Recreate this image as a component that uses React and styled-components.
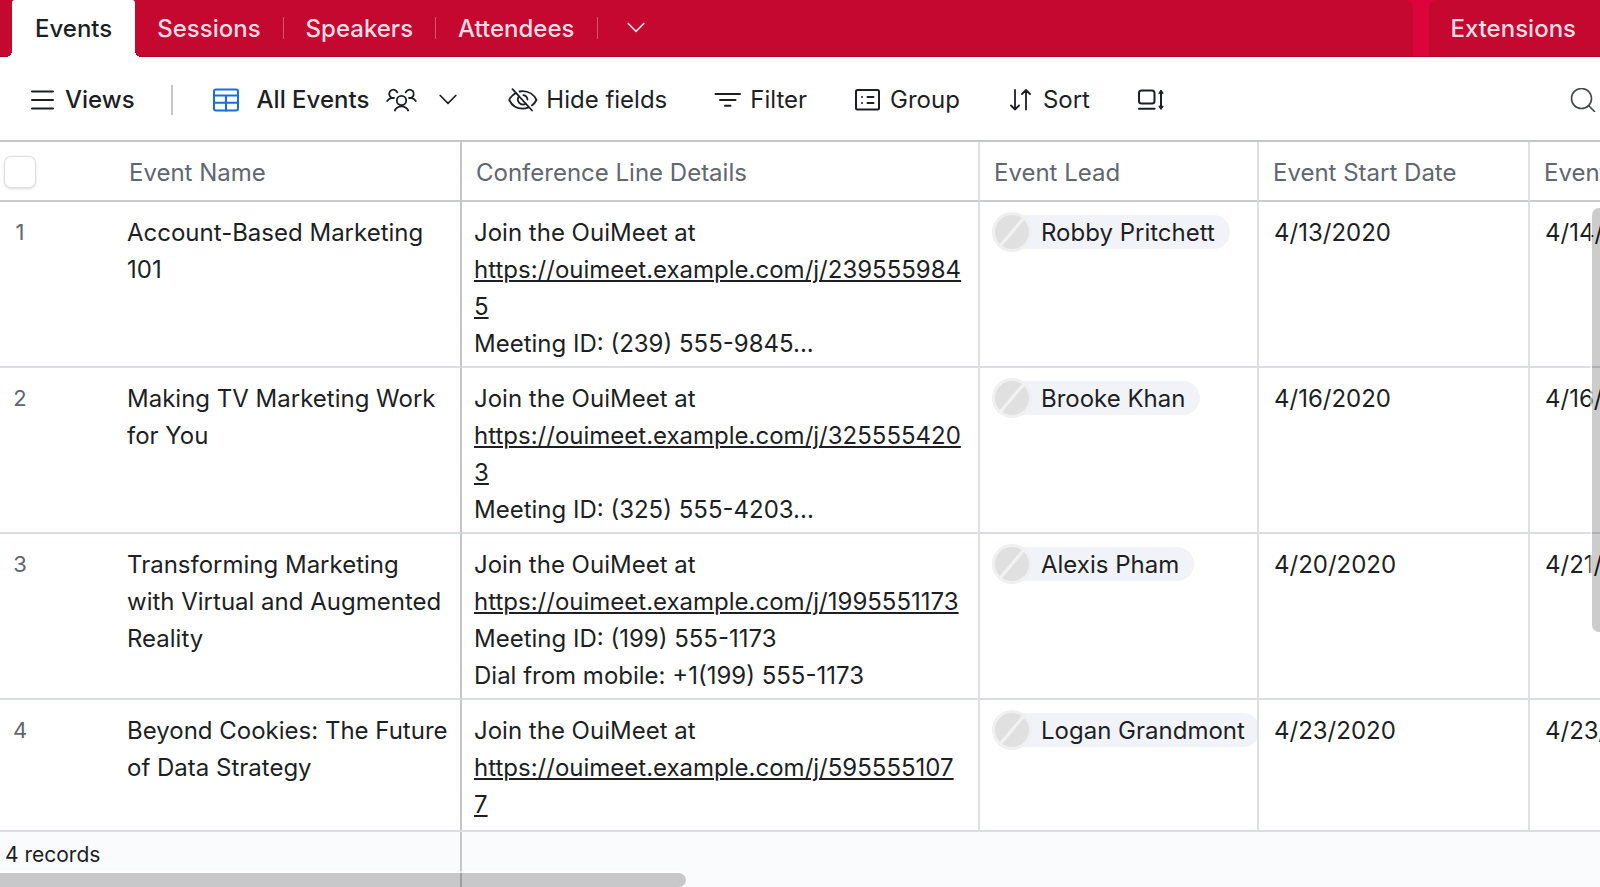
import React from "react";
import styled, { createGlobalStyle, css } from "styled-components";

const Global = createGlobalStyle`
  * { box-sizing: border-box; }
  body { margin: 0; background: #fff; }
  button { border: 0; padding: 0; margin: 0; background: none; font: inherit; color: inherit; cursor: pointer; }
`;

const Page = styled.div`
  display: flex;
  flex-direction: column;
  height: 100vh;
  overflow: hidden;
  color: #1d1f25;
  font: 400 24px/37px Inter, "Liberation Sans", sans-serif;
`;

const TopBar = styled.header`
  flex: none;
  display: flex;
  gap: 16px;
  height: 57px;
  background: #dc043b;
  border-bottom: 1px solid #ab0229;
`;

const TabStrip = styled.nav`
  flex: 1;
  display: flex;
  align-items: center;
  background: #c40830;
  border-radius: 0 8px 0 0;
  color: #fcdde3;
  font-weight: 500;
`;

const Tab = styled.button`
  height: 56px;
  padding: 0 22px;
  display: flex;
  align-items: center;
  ${(p) => p.$active && css`
    position: relative;
    align-self: flex-start;
    height: 57px;
    padding: 0 23px;
    margin-left: 12px;
    background: #fff;
    border-radius: 3px 3px 0 0;
    color: #1d1f25;

    &::before,
    &::after {
      content: "";
      position: absolute;
      bottom: 0;
      width: 6px;
      height: 6px;
    }
    &::before {
      right: 100%;
      background: radial-gradient(circle at 0 0, transparent 6px, #fff 6px);
    }
    &::after {
      left: 100%;
      background: radial-gradient(circle at 100% 0, transparent 6px, #fff 6px);
    }
  `}
`;

const MoreTab = styled(Tab)`
  padding: 0 29px;
`;

const TabDivider = styled.span`
  width: 1px;
  height: 22px;
  background: #d6536e;
`;

const Extensions = styled.button`
  flex: none;
  padding: 0 24px 0 21px;
  background: #c40830;
  border-radius: 8px 0 0 0;
  color: #fcdde3;
  font-weight: 500;
`;

const Toolbar = styled.div`
  flex: none;
  display: flex;
  align-items: center;
  height: 85px;
  padding: 2px 4px 0 30px;
  border-bottom: 2px solid #c4c6c8;
`;

const Tool = styled.button`
  display: flex;
  align-items: center;
  gap: ${(p) => p.$gap || 8}px;
  margin-right: ${(p) => p.$after || 47}px;
  font-weight: ${(p) => (p.$strong ? 500 : 400)};
  white-space: nowrap;
`;

const SearchButton = styled.button`
  margin-left: auto;
`;

const ToolDivider = styled.span`
  width: 2px;
  height: 30px;
  margin-right: 39px;
  background: #c4c6c8;
`;

const GridArea = styled.main`
  position: relative;
  flex: 1;
  min-height: 0;
  overflow: hidden;
`;

const Grid = styled.table`
  width: 1802px;
  table-layout: fixed;
  border-collapse: separate;
  border-spacing: 0;
`;

const Column = styled.col`
  width: ${(p) => p.$width}px;
`;

const columnEdge = (p) => (p.$bare ? "0" : p.$frozen ? "2px solid #c4c6c8" : "2px solid #dde1e3");

const HeadCell = styled.th`
  height: 60px;
  padding: 2px 14px 0;
  border-bottom: 2px solid #c8cacc;
  border-right: ${columnEdge};
  color: #616670;
  font-weight: 400;
  text-align: left;
  white-space: nowrap;
`;

const Cell = styled.td`
  height: 166px;
  padding: 12px 12px 0;
  vertical-align: top;
  border-bottom: 2px solid #d9dee0;
  border-right: ${columnEdge};
  overflow: hidden;
`;

const NumberCell = styled(Cell)`
  padding: 12px 75px 0 0;
  color: #616670;
  font-size: 22px;
  text-align: center;
`;

const LeadCell = styled(Cell)`
  padding-top: 13px;
`;

const DateCell = styled(Cell)`
  padding-left: 15px;
`;

const CheckHead = styled(HeadCell)`
  padding: 2px 4px 0;
`;

const CheckBox = styled.input`
  appearance: none;
  display: block;
  width: 32px;
  height: 32px;
  margin: 0;
  background: #fff;
  border: 1px solid #dcdee0;
  border-radius: 7px;
  box-shadow: 0 1px 3px rgba(0, 0, 0, 0.14);
`;

const Details = styled.div`
  white-space: pre-line;
  word-break: break-all;
`;

const Link = styled.a`
  color: inherit;
  text-decoration: underline;
  text-decoration-thickness: 2px;
  text-underline-offset: 2px;
`;

const Person = styled.div`
  display: flex;
  align-items: center;
  gap: 9px;
  width: max-content;
  height: 34px;
  padding-right: 15px;
  background: #f2f3f8;
  border-radius: 17px;
  white-space: nowrap;
`;

const Footer = styled.footer`
  position: relative;
  flex: none;
  display: flex;
  height: 57px;
  background: #fafbfd;
  border-top: 2px solid #d9dee0;
  font-size: 21px;
`;

const RecordCount = styled.div`
  width: 462px;
  padding: 4px 5px;
  border-right: 2px solid #c4c6c8;
`;

const Thumb = styled.div`
  position: absolute;
  border-radius: 7px;
  background: rgba(0, 0, 0, 0.2);
  box-shadow: 0 0 0 2px rgba(255, 255, 255, 0.6);
  ${(p) => p.$vertical
    ? css`top: 66px; right: -6px; width: 14px; height: 424px;`
    : css`bottom: 0; left: -8px; width: 694px; height: 14px;`}
`;

const Svg = styled.svg`
  flex: none;
  display: block;
  fill: none;
  stroke: ${(p) => p.$tone || "currentColor"};
  stroke-width: ${(p) => p.$stroke || 2};
  stroke-linecap: round;
  stroke-linejoin: round;
`;

const Icon = ({ w, h = 24, children, ...rest }) => (
  <Svg width={w} height={h} viewBox={`0 0 ${w} ${h}`} aria-hidden="true" {...rest}>{children}</Svg>
);

const Chevron = () => (
  <Icon w={18} h={12} $stroke={1.7}><path d="M1.200 1.500l7.800 7.800 7.800-7.800" /></Icon>
);

const MenuIcon = () => (
  <Icon w={24}><path d="M2 3.500h21M2 12h21M2 20.500h21" /></Icon>
);

const TableIcon = () => (
  <Icon w={28} $tone="#166ee1">
    <rect x="2" y="1.500" width="24" height="21" rx="2" />
    <path d="M2 7.500h24M2 14.800h24M14 7.500v15" />
  </Icon>
);

const PeopleIcon = () => (
  <Icon w={36} $stroke={1.8}>
    <circle cx="15.500" cy="12.500" r="4.700" />
    <path d="M8.800 22.500a7.500 7.500 0 0 1 13.400 0" />
    <path d="M11.300 4.300A4.200 4.200 0 1 0 5.800 9.800C3.800 10.200 2.200 11.300 1.200 13M5.800 9.800l2.200.2" />
    <path d="M19.700 4.300A4.200 4.200 0 1 1 25.200 9.800C27.200 10.200 28.800 11.300 29.800 13M25.200 9.800l-2.200.2" />
  </Icon>
);

const EyeOffIcon = () => (
  <Icon w={30} $stroke={1.8}>
    <path d="M4.500 1.200L24 22.500" />
    <path d="M8 5C4.500 7 2.200 9.600 1.200 12c2.500 5 7.600 8.700 13.300 8.700 2.200 0 4.100-.4 5.900-1.300" />
    <path d="M11.500 3.500c1-.2 2-.3 3-.3 6 0 11.500 3.500 14 8.800-1 2-2.600 4-4.600 5.400" />
    <path d="M17.600 15.700A5 5 0 0 1 11 8.400M15.400 7.200a5 5 0 0 1 4.100 4.400" />
  </Icon>
);

const FilterIcon = () => (
  <Icon w={28}><path d="M1.500 6h24.500M6 12h15.500M11 17.800h5.500" /></Icon>
);

const GroupIcon = () => (
  <Icon w={28}>
    <rect x="2" y="2" width="23" height="19.500" rx="1.500" />
    <path d="M13.500 9h6M13.500 15h6M8 9h.010M8 15h.010" />
  </Icon>
);

const SortIcon = () => (
  <Icon w={27} $stroke={1.8}>
    <path d="M7 2v19.500M3 17.500l4 4 4-4M18 21.500V2M14 6l4-4 4 4" />
  </Icon>
);

const RowHeightIcon = () => (
  <Icon w={28}>
    <rect x="2" y="2.500" width="15.500" height="13" rx="2.500" />
    <path d="M2 20.800h15.500M24 4v15" />
    <path d="M22 5l2-3 2 3zM22 18.500l2 3 2-3z" fill="currentColor" strokeWidth="1" />
  </Icon>
);

const SearchIcon = () => (
  <Icon w={26} $tone="#45484f" $stroke={1.6}>
    <circle cx="11.500" cy="10.500" r="10" />
    <path d="M18.500 17.500l6 6" />
  </Icon>
);

const Avatar = () => (
  <Icon w={40} h={40} $tone="none">
    <circle cx="20" cy="20" r="20" fill="#f0f0f0" />
    <circle cx="20" cy="20" r="17" fill="#e0e0e0" />
    <path d="M9 33L31 7" stroke="#f2f2f2" strokeWidth="3" />
  </Icon>
);

const columnWidths = [115, 347, 518, 279, 271, 272];

const events = [
  { name: "Account-Based Marketing 101", link: "https://ouimeet.example.com/j/2395559845", after: "Meeting ID: (239) 555-9845...", lead: "Robby Pritchett", start: "4/13/2020", end: "4/14/2020" },
  { name: "Making TV Marketing Work for You", link: "https://ouimeet.example.com/j/3255554203", after: "Meeting ID: (325) 555-4203...", lead: "Brooke Khan", start: "4/16/2020", end: "4/16/2020" },
  { name: "Transforming Marketing with Virtual and Augmented Reality", link: "https://ouimeet.example.com/j/1995551173", after: "Meeting ID: (199) 555-1173\nDial from mobile: +1(199) 555-1173", lead: "Alexis Pham", start: "4/20/2020", end: "4/21/2020" },
  { name: "Beyond Cookies: The Future of Data Strategy", link: "https://ouimeet.example.com/j/5955551077", after: "", lead: "Logan Grandmont", start: "4/23/2020", end: "4/23/2020" },
];

export default function App() {
  return (
    <Page>
      <Global />
      <TopBar>
        <TabStrip>
          <Tab $active>Events</Tab>
          <Tab>Sessions</Tab>
          <TabDivider />
          <Tab>Speakers</Tab>
          <TabDivider />
          <Tab>Attendees</Tab>
          <TabDivider />
          <MoreTab aria-label="More tables"><Chevron /></MoreTab>
        </TabStrip>
        <Extensions>Extensions</Extensions>
      </TopBar>
      <Toolbar>
        <Tool $strong $gap={11} $after={36}><MenuIcon />Views</Tool>
        <ToolDivider />
        <Tool $strong $gap={17} $after={51}><TableIcon />All Events<PeopleIcon /><Chevron /></Tool>
        <Tool><EyeOffIcon />Hide fields</Tool>
        <Tool><FilterIcon />Filter</Tool>
        <Tool $after={48}><GroupIcon />Group</Tool>
        <Tool><SortIcon />Sort</Tool>
        <Tool aria-label="Row height"><RowHeightIcon /></Tool>
        <SearchButton aria-label="Search"><SearchIcon /></SearchButton>
      </Toolbar>
      <GridArea>
        <Grid>
          <colgroup>
            {columnWidths.map((w, i) => <Column key={i} $width={w} />)}
          </colgroup>
          <thead>
            <tr>
              <CheckHead $bare><CheckBox type="checkbox" aria-label="Select all" /></CheckHead>
              <HeadCell $frozen>Event Name</HeadCell>
              <HeadCell>Conference Line Details</HeadCell>
              <HeadCell>Event Lead</HeadCell>
              <HeadCell>Event Start Date</HeadCell>
              <HeadCell>Event End Date</HeadCell>
            </tr>
          </thead>
          <tbody>
            {events.map((e, i) => (
              <tr key={e.name}>
                <NumberCell $bare>{i + 1}</NumberCell>
                <Cell $frozen>{e.name}</Cell>
                <Cell><Details>Join the OuiMeet at<br /><Link href={e.link}>{e.link}</Link><br />{e.after}</Details></Cell>
                <LeadCell><Person><Avatar />{e.lead}</Person></LeadCell>
                <DateCell>{e.start}</DateCell>
                <DateCell>{e.end}</DateCell>
              </tr>
            ))}
          </tbody>
        </Grid>
        <Thumb $vertical />
      </GridArea>
      <Footer>
        <RecordCount>4 records</RecordCount>
        <Thumb />
      </Footer>
    </Page>
  );
}
